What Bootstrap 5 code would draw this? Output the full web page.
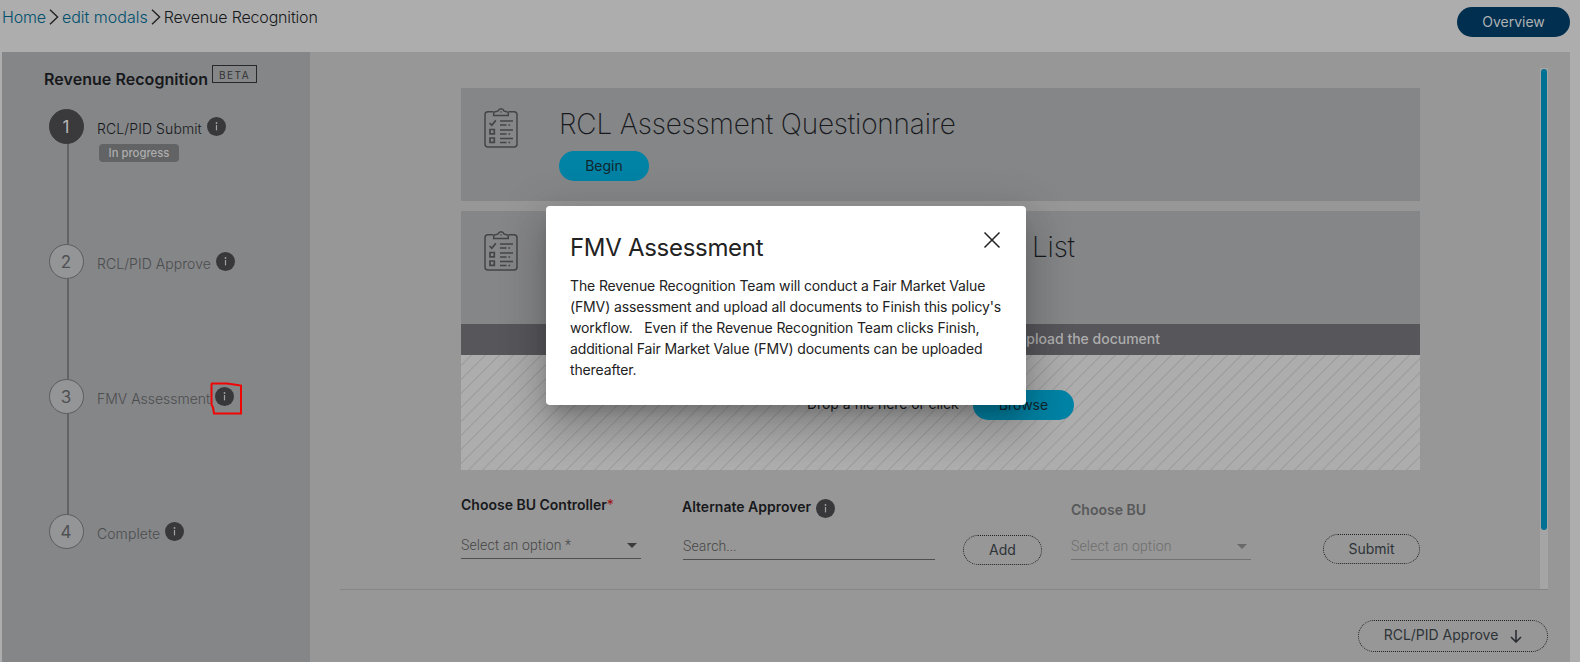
<!DOCTYPE html>
<html lang="en">
<head>
<meta charset="utf-8">
<title>Revenue Recognition</title>
<link href="https://cdn.jsdelivr.net/npm/bootstrap@5.3.0/dist/css/bootstrap.min.css" rel="stylesheet">
<style>
body{background:#adadad;font-family:Inter,Roboto,sans-serif;font-size:14px;font-weight:300;color:#17191c;height:662px;overflow:hidden;line-height:20px}
.topbar{height:52px;padding:7px 10px 0 2px}
.crumbs{font-size:16px;height:20px;gap:3px;letter-spacing:-.17px}
.crumbs a{color:#00506d;text-decoration:none}
.crumbs a:nth-of-type(2){letter-spacing:0}
.pill{height:30px;border-radius:15px;border:0;display:inline-flex;align-items:center;justify-content:center;font-size:14px;padding:0;font-weight:400;flex:none}
.pill-navy{background:#002f4f;color:#b0b2b4;width:113px}
.pill-teal{background:#0083a5;color:#12262e}
.pill-line{background:transparent;border:1px dotted #222;color:#2e3338}
.shell{height:610px;margin:0 10px 0 2px}
.side{width:308px;background:#858688;padding:13px 0 0 42px}
.title-row{margin-bottom:20px}
.side h1{font-size:16px;font-weight:600;line-height:20px;letter-spacing:.05px;margin:4px 4px 0 0}
.beta{border:1px solid #26282b;width:45px;height:18px;font-size:10px;letter-spacing:1.5px;line-height:19px;text-align:center;font-weight:400;color:#333}
.step{height:135px;padding-left:5px}
.rail{width:35px;margin-right:13px}
.dot{width:35px;height:35px;border-radius:50%;border:1px solid #5b5c5e;background:#949597;color:#505153;font-size:17px;display:flex;align-items:center;justify-content:center;flex:none;font-weight:400;padding-right:1px}
.rail i{width:2px;flex:1;background:#626365;margin-left:3px}
.dot.on{background:#3a3a3c;border-color:#3a3a3c;color:#b5b5b5}
.lbl{color:#4c4d4f;height:36px;line-height:39px;letter-spacing:.06px}
.lbl svg{margin:8px 0 0 5px}
.lbl.tight{letter-spacing:-.02px}
.lbl.on{color:#17191c;letter-spacing:.1px}
.prog{background:#626365;color:#adadad;font-size:11.300px;font-weight:500;border-radius:4px;width:80px;height:18px;line-height:18px;margin:-1px 0 0 2px;text-align:center}
.marked{position:relative}
.marked .scribble{position:absolute;left:-8px;top:2px;margin:0}
.work{background:#979797;padding:16px 22px 0 30px}
.scroller{height:522px;border-bottom:1px solid #868686}
.content{width:959px;margin:20px 0 0 121px}
.panel{height:113px;background:#858688;padding:20px 0 0 23px}
.panel h2{font-size:28px;font-weight:200;line-height:32px;letter-spacing:-.2px;margin:0 0 11px 0}
.questionnaire{margin-left:41px}
.panel .list-title{margin-left:514px}
.documents{margin-top:10px}
.up{height:31px;background:#57565b;color:#adadad;font-weight:500;line-height:29px;padding-right:260px;text-align:right;letter-spacing:0}
.drop{height:115px;padding:35px 0 0 346px;background:#adadad repeating-linear-gradient(-45deg,transparent 0 8.9px,#a0a0a0 8.9px 9.9px)}
.drop span{margin-top:4px;width:166px;font-weight:400;letter-spacing:-.08px}
.field{border-bottom:1px solid #4f4f4f;height:27px;color:#454545;line-height:27px;font-family:Roboto,Inter,sans-serif;letter-spacing:.13px}
.caret{border:5px solid transparent;border-top-color:#3c3c3c;border-bottom:0;margin:11px 4px 0 0}
.flab{font-weight:600;line-height:20px}
.off{opacity:.5}
.star{color:#a01010;font-weight:400}
.track{width:8px;height:521px;background:#a5a5a5;padding:1px}
.thumb{height:461px;border-radius:3px;background:#007192}
.begin{width:90px}.browse{width:101px}
.add{width:79px;margin:65px 0 0 28px}
.submit{width:97px;margin:64px 0 0 72px}
.next{width:190px;height:32px;border-radius:16px;margin-top:30px;gap:12px}
.next span{margin-top:-2px}
.f1{width:180px;padding-top:25px}.f1 .field{margin-top:17px}
.f2{width:252px;margin-left:42px;padding-top:27px}.f2 .field{margin-top:16px;line-height:26px}.f2 svg{margin:2px 0 0 5px}.f2 .flab{height:20px;margin-left:-1px}
.f3{width:180px;margin-left:29px;padding-top:30px}.f3 .field{margin-top:13px}
.dlg{position:absolute;left:546px;top:206px;width:480px;height:199px;background:#fff;border-radius:4px;padding:24px;box-shadow:0 11px 15px -7px rgba(0,0,0,.2),0 24px 38px 3px rgba(0,0,0,.14),0 9px 46px 8px rgba(0,0,0,.12);font-weight:400;color:#222}
.dlg h3{font-size:24px;line-height:36px;font-weight:400;letter-spacing:-.3px;margin:0 0 9px}
.dlg p{line-height:21px;margin:0;white-space:pre;letter-spacing:-.135px}
.dlg .close-x{margin:1px 1px 0 0}
</style>
</head>
<body>
<svg width="0" height="0" class="position-absolute">
<symbol id="info" viewBox="0 0 19 19"><circle cx="9.5" cy="9.5" r="9.5" fill="#38383a"/><circle cx="9.5" cy="6" r=".9" fill="#a0a0a0"/><path d="M9.5 8v5.4" stroke="#a0a0a0" stroke-width="1.2"/></symbol>
<symbol id="chev" viewBox="0 0 10 16"><path d="M1 .8 8.6 8 1 15.2" fill="none" stroke="#222" stroke-width="1.4"/></symbol>
<symbol id="clip" viewBox="0 0 34 40"><g fill="none" stroke="#444547" stroke-width="1.5"><path d="M9.500 3.700H4Q1 3.700 1 6.700V36q0 3 3 3h26q3 0 3-3V6.700q0-3-3-3h-5.500"/><path d="M9.700 7.500V5.500q0-1.500 1.500-1.800l2.600-.5Q15 .8 17 .8t3.200 2.400l2.600.5q1.500.3 1.500 1.800v2z"/><path d="m5.500 15 2.300 2.200 4-4.800M6 21.500h4.300v4.300H6zM6 30h4.300v4.300H6zM16 13h13M16 17h6.500m2 0h1.600M16 22h13M16 26h6.500m2 0h1.600M16 30.500h13M16 34.500h6.500m2 0h1.600" stroke-width="1.700"/></g><circle cx="17" cy="4" r=".8" fill="#444547"/></symbol>
</svg>
<header class="topbar d-flex justify-content-between align-items-start">
<nav class="crumbs d-flex align-items-center"><a href="#">Home</a><svg width="10" height="16"><use href="#chev"/></svg><a href="#">edit modals</a><svg width="10" height="16"><use href="#chev"/></svg><span>Revenue Recognition</span></nav>
<button class="pill pill-navy">Overview</button>
</header>
<div class="shell d-flex">
<aside class="side flex-shrink-0">
<div class="title-row d-flex"><h1>Revenue Recognition</h1><span class="beta">BETA</span></div>
<div class="step d-flex"><div class="rail d-flex flex-column align-items-center"><span class="dot on">1</span><i></i></div><div><div class="lbl on d-flex align-items-start">RCL/PID Submit<svg width="19" height="19"><use href="#info"/></svg></div><div class="prog">In progress</div></div></div>
<div class="step d-flex"><div class="rail d-flex flex-column align-items-center"><span class="dot">2</span><i></i></div><div class="lbl d-flex align-items-start">RCL/PID Approve<svg width="19" height="19"><use href="#info"/></svg></div></div>
<div class="step d-flex"><div class="rail d-flex flex-column align-items-center"><span class="dot">3</span><i></i></div><div class="lbl tight d-flex align-items-start">FMV Assessment<span class="marked d-flex"><svg width="19" height="19"><use href="#info"/></svg><svg class="scribble" width="42" height="36" viewBox="-10 0 42 36"><path d="M-1 2h16l7 1 7 1v28H2L1 26-.500 23V2" transform="translate(0 .5)" fill="none" stroke="#f00505" stroke-width="2"/></svg></span></div></div>
<div class="step d-flex"><div class="rail"><span class="dot">4</span></div><div class="lbl d-flex align-items-start">Complete<svg width="19" height="19"><use href="#info"/></svg></div></div>
</aside>
<main class="work flex-grow-1">
<div class="scroller d-flex justify-content-between">
<div class="content">
<section class="panel d-flex"><svg width="34" height="40" class="flex-shrink-0"><use href="#clip"/></svg><div class="questionnaire"><h2>RCL Assessment Questionnaire</h2><button class="pill pill-teal begin">Begin</button></div></section>
<section class="documents"><div class="panel d-flex"><svg width="34" height="40" class="flex-shrink-0"><use href="#clip"/></svg><h2 class="list-title">List</h2></div>
<div class="up">upload the document</div>
<div class="drop d-flex"><span>Drop a file here or click</span><button class="pill pill-teal browse">Browse</button></div></section>
<form class="d-flex align-items-start">
<div class="f1"><div class="flab">Choose BU Controller<span class="star">*</span></div><div class="field d-flex justify-content-between"><span>Select an option *</span><span class="caret"></span></div></div>
<div class="f2"><div class="flab d-flex">Alternate Approver<svg width="19" height="19"><use href="#info"/></svg></div><div class="field">Search...</div></div>
<button type="button" class="pill pill-line add">Add</button>
<div class="f3 off"><div class="flab">Choose BU</div><div class="field d-flex justify-content-between"><span>Select an option</span><span class="caret"></span></div></div>
<button type="button" class="pill pill-line submit">Submit</button>
</form>
</div>
<div class="track"><div class="thumb"></div></div>
</div>
<div class="d-flex justify-content-end"><button class="pill pill-line next"><span>RCL/PID Approve</span><svg width="12" height="13" viewBox="0 0 12 13"><path d="M6 0v12M1 7l5 5 5-5" fill="none" stroke="#2a2e33" stroke-width="1.600"/></svg></button></div>
</main>
</div>
<div class="dlg" role="dialog"><div class="d-flex justify-content-between"><h3>FMV Assessment</h3><svg width="18" height="18" viewBox="0 0 18 18" class="close-x"><path d="m1.500 1.500 15 15m0-15-15 15" stroke="#222" stroke-width="1.500"/></svg></div>
<p>The Revenue Recognition Team will conduct a Fair Market Value
(FMV) assessment and upload all documents to Finish this policy's
workflow.&nbsp;&nbsp; Even if the Revenue Recognition Team clicks Finish,
additional Fair Market Value (FMV) documents can be uploaded
thereafter.</p></div>
<script src="https://cdn.jsdelivr.net/npm/bootstrap@5.3.0/dist/js/bootstrap.bundle.min.js"></script>
</body>
</html>
